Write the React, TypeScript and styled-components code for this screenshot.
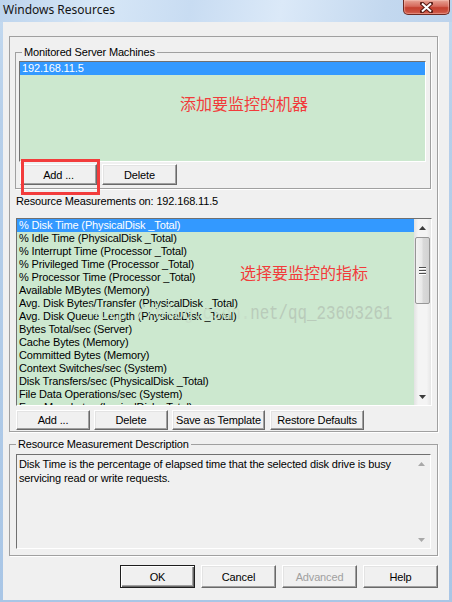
import React from 'react';
import styled, { createGlobalStyle, css } from 'styled-components';

const GlobalStyle = createGlobalStyle`
  *, *::before, *::after { box-sizing: border-box; }
  html, body { margin: 0; padding: 0; overflow: hidden; background: #fff; }
  body {
    font-family: "Liberation Sans", Arial, sans-serif;
    font-size: 11px;
    letter-spacing: -0.15px;
    color: #000;
  }
`;

const Window = styled.div`
  position: relative;
  width: 452px;
  height: 602px;
  display: flex;
  flex-direction: column;
  background: linear-gradient(to bottom, #c4daf0, #b6cfea 120px, #a9c6e6);
  overflow: hidden;
`;

const TitleBar = styled.div`
  flex: 0 0 22px;
  display: flex;
  justify-content: space-between;
  align-items: flex-start;
  padding: 0 2px 0 3px;
  background: linear-gradient(100deg, #bdd4ed 0%, #d7e7f7 22%, #c8dcf2 42%, #dbe9f8 62%, #c3d8ef 85%, #bcd3ec 100%);
`;

const Title = styled.span`
  font-family: "Noto Sans", "Segoe UI", sans-serif;
  font-size: 12px;
  line-height: 20px;
  letter-spacing: 0;
  color: #141414;
`;

const CloseButton = styled.div`
  width: 47px;
  height: 15px;
  border: 1px solid #6e2a22;
  border-top: none;
  border-radius: 0 0 5px 5px;
  background: linear-gradient(to bottom, #e7a394 0%, #d66a5c 45%, #c4402f 55%, #cf5a48 100%);
  box-shadow: inset 0 0 1px 1px rgba(255, 210, 200, 0.45);
  display: flex;
  align-items: center;
  justify-content: center;
`;

const Client = styled.div`
  flex: 1;
  margin: 0 3px 2px 3px;
  padding: 14px 11px 0 6px;
  background: #f0f0f0;
  display: flex;
  flex-direction: column;
`;

const etched = css`
  border: 1px solid #a0a0a0;
  box-shadow: 1px 1px 0 #fff;
`;

const sunken = css`
  border: 1px solid;
  border-color: #707070 #fff #fff #707070;
`;

const OuterBox = styled.div`
  ${etched}
  display: flex;
  flex-direction: column;
  padding-bottom: 1px;
`;

const Group = styled.div<{ $pad: string; $mt: number }>`
  ${etched}
  display: flex;
  flex-direction: column;
  margin-top: ${p => p.$mt}px;
  padding: ${p => p.$pad};
`;

const MachinesGroup = styled(Group)`
  margin-left: 5px;
  margin-right: 6px;
`;

const Caption = styled.span`
  align-self: flex-start;
  height: 13px;
  line-height: 13px;
  margin: -7px 0 0 3px;
  padding: 0 2px;
  background: #f0f0f0;
  white-space: nowrap;
`;

const ListBox = styled.div<{ $h: number; $mt: number }>`
  ${sunken}
  position: relative;
  display: flex;
  height: ${p => p.$h}px;
  margin-top: ${p => p.$mt}px;
  background: #cce8cf;
  overflow: hidden;
`;

const MetricList = styled(ListBox)`
  margin-left: 6px;
  margin-right: 5px;
`;

const Items = styled.div`
  flex: 1;
  min-width: 0;
  display: flex;
  flex-direction: column;
  overflow: hidden;
`;

const Item = styled.div<{ $selected?: boolean }>`
  flex: 0 0 13px;
  height: 13px;
  line-height: 13px;
  padding-left: 2px;
  white-space: nowrap;
  ${p => p.$selected && css`
    background: #3399ff;
    color: #fff;
  `}
`;

const ScrollBar = styled.div<{ $disabled?: boolean }>`
  flex: 0 0 17px;
  display: flex;
  flex-direction: column;
  background: ${p => p.$disabled
    ? '#f0f0f0'
    : 'linear-gradient(to right, #e2e2e2, #f4f4f4 25%, #f4f4f4 75%, #e6e6e6)'};
`;

const ArrowCell = styled.div`
  flex: 0 0 17px;
  display: flex;
  align-items: center;
  justify-content: center;
`;

const Thumb = styled.div`
  flex: 0 0 67px;
  margin: 1px 1px 0 1px;
  border: 1px solid #969696;
  border-radius: 2px;
  background: linear-gradient(to right, #f3f3f3, #e8e8e8 45%, #d9d9d9 55%, #d2d2d2);
  display: flex;
  align-items: center;
  justify-content: center;
`;

const Grip = styled.div`
  width: 7px;
  height: 8px;
  background: repeating-linear-gradient(to bottom, #4f4f4f 0 1px, #fff 1px 2px, transparent 2px 3px);
`;

const Track = styled.div`
  flex: 1;
`;

const Label = styled.div`
  margin: 6px 0 0 6px;
  height: 13px;
  line-height: 13px;
  white-space: nowrap;
`;

const ButtonRow = styled.div<{ $mt: number; $ml: number; $gap: number }>`
  display: flex;
  gap: ${p => p.$gap}px;
  margin-top: ${p => p.$mt}px;
  margin-left: ${p => p.$ml}px;
`;

const FooterRow = styled.div`
  display: flex;
  justify-content: flex-end;
  gap: 6px;
  margin-top: 9px;
`;

const Button = styled.button<{ $w: number; $h: number; $default?: boolean; $gapLeft?: number }>`
  width: ${p => p.$w}px;
  height: ${p => p.$h}px;
  margin-left: ${p => p.$gapLeft || 0}px;
  padding: 0;
  font-family: "Liberation Sans", Arial, sans-serif;
  font-size: 11px;
  letter-spacing: -0.15px;
  color: #000;
  background: #f0f0f0;
  border: 1px solid;
  border-color: #fff #696969 #696969 #fff;
  box-shadow: inset -1px -1px 0 #a0a0a0, inset 1px 1px 0 #e3e3e3;
  ${p => p.$default && css`
    border-color: #1e1e1e;
    box-shadow: inset 1px 1px 0 #fff, inset -1px -1px 0 #696969, inset -2px -2px 0 #a0a0a0;
  `}
  &:disabled {
    color: #a0a0a0;
  }
`;

const DescBox = styled.div`
  ${sunken}
  display: flex;
  height: 95px;
  margin: 3px 0 0 3px;
`;

const DescText = styled.p`
  flex: 1;
  margin: 0;
  padding: 2px 2px 0 2px;
  line-height: 14px;
  white-space: pre-line;
`;

const Note = styled.span<{ $x: number; $y: number }>`
  position: absolute;
  left: ${p => p.$x}px;
  top: ${p => p.$y}px;
  font-family: "Noto Sans CJK SC", sans-serif;
  font-size: 16px;
  line-height: 16px;
  letter-spacing: 0;
  color: #f23b3b;
  white-space: nowrap;
`;

const Watermark = styled.span`
  position: absolute;
  left: 72px;
  top: 84px;
  font-family: "Liberation Mono", monospace;
  font-size: 15.8px;
  line-height: 16px;
  letter-spacing: 0;
  transform: scaleY(1.3);
  transform-origin: top left;
  white-space: nowrap;
  color: #b9cbba;
  pointer-events: none;
`;

const Faint = styled.span`
  color: #c7dec9;
`;

const Highlight = styled.div`
  position: absolute;
  left: 21px;
  top: 159px;
  width: 79px;
  height: 36px;
  border: 3px solid #f23c3c;
  pointer-events: none;
`;

const Arrow: React.FC<{ up?: boolean; color: string }> = ({ up, color }) => (
  <svg width="7" height="4" viewBox="0 0 7 4">
    <polygon points={up ? '0,4 7,4 3.5,0' : '0,0 7,0 3.5,4'} fill={color} />
  </svg>
);

const metrics = [
  '% Disk Time (PhysicalDisk _Total)',
  '% Idle Time (PhysicalDisk _Total)',
  '% Interrupt Time (Processor _Total)',
  '% Privileged Time (Processor _Total)',
  '% Processor Time (Processor _Total)',
  'Available MBytes (Memory)',
  'Avg. Disk Bytes/Transfer (PhysicalDisk _Total)',
  'Avg. Disk Queue Length (PhysicalDisk _Total)',
  'Bytes Total/sec (Server)',
  'Cache Bytes (Memory)',
  'Committed Bytes (Memory)',
  'Context Switches/sec (System)',
  'Disk Transfers/sec (PhysicalDisk _Total)',
  'File Data Operations/sec (System)',
  'Free Megabytes (LogicalDisk _Total)',
];

const App: React.FC = () => {
  return (
    <>
      <GlobalStyle />
      <Window>
        <TitleBar>
          <Title>Windows Resources</Title>
          <CloseButton>
            <svg width="13" height="11" viewBox="0 0 13 11">
              <path d="M2 1.5 L11 9.5 M11 1.5 L2 9.5" stroke="#5a1c15" strokeWidth="4" strokeLinecap="square" />
              <path d="M2 1.5 L11 9.5 M11 1.5 L2 9.5" stroke="#fff" strokeWidth="2" />
            </svg>
          </CloseButton>
        </TitleBar>

        <Client>
          <OuterBox>
            <MachinesGroup $mt={15} $pad="0 4px 3px 3px">
              <Caption>Monitored Server Machines</Caption>
              <ListBox $h={101} $mt={2}>
                <Items>
                  <Item $selected>192.168.11.5</Item>
                </Items>
                <Note $x={160} $y={33}>添加要监控的机器</Note>
              </ListBox>
              <ButtonRow $mt={2} $ml={1} $gap={5}>
                <Button $w={77} $h={21}>Add ...</Button>
                <Button $w={75} $h={21}>Delete</Button>
              </ButtonRow>
            </MachinesGroup>

            <Label>Resource Measurements on: 192.168.11.5</Label>

            <MetricList $h={188} $mt={10}>
              <Items>
                {metrics.map((m, i) => (
                  <Item key={m} $selected={i === 0}>{m}</Item>
                ))}
              </Items>
              <ScrollBar>
                <ArrowCell><Arrow up color="#3c3c3c" /></ArrowCell>
                <Thumb><Grip /></Thumb>
                <Track />
                <ArrowCell><Arrow color="#3c3c3c" /></ArrowCell>
              </ScrollBar>
              <Note $x={223} $y={45}>选择要监控的指标</Note>
              <Watermark><Faint>http://blog.csdn.</Faint>net/qq_23603261</Watermark>
            </MetricList>

            <ButtonRow $mt={4} $ml={6} $gap={4}>
              <Button $w={74} $h={20}>Add ...</Button>
              <Button $w={74} $h={20}>Delete</Button>
              <Button $w={93} $h={20}>Save as Template</Button>
              <Button $w={94} $h={20} $gapLeft={1}>Restore Defaults</Button>
            </ButtonRow>
          </OuterBox>

          <Group $mt={12} $pad="0 6px 6px 3px">
            <Caption>Resource Measurement Description</Caption>
            <DescBox>
              <DescText>
                {'Disk Time is the percentage of elapsed time that the selected disk drive is busy\nservicing read or write requests.'}
              </DescText>
              <ScrollBar $disabled>
                <ArrowCell><Arrow up color="#a8a8a8" /></ArrowCell>
                <Track />
                <ArrowCell><Arrow color="#a8a8a8" /></ArrowCell>
              </ScrollBar>
            </DescBox>
          </Group>

          <FooterRow>
            <Button $w={75} $h={23} $default>OK</Button>
            <Button $w={75} $h={23}>Cancel</Button>
            <Button $w={75} $h={23} disabled>Advanced</Button>
            <Button $w={75} $h={23}>Help</Button>
          </FooterRow>
        </Client>

        <Highlight />
      </Window>
    </>
  );
};

export default App;
